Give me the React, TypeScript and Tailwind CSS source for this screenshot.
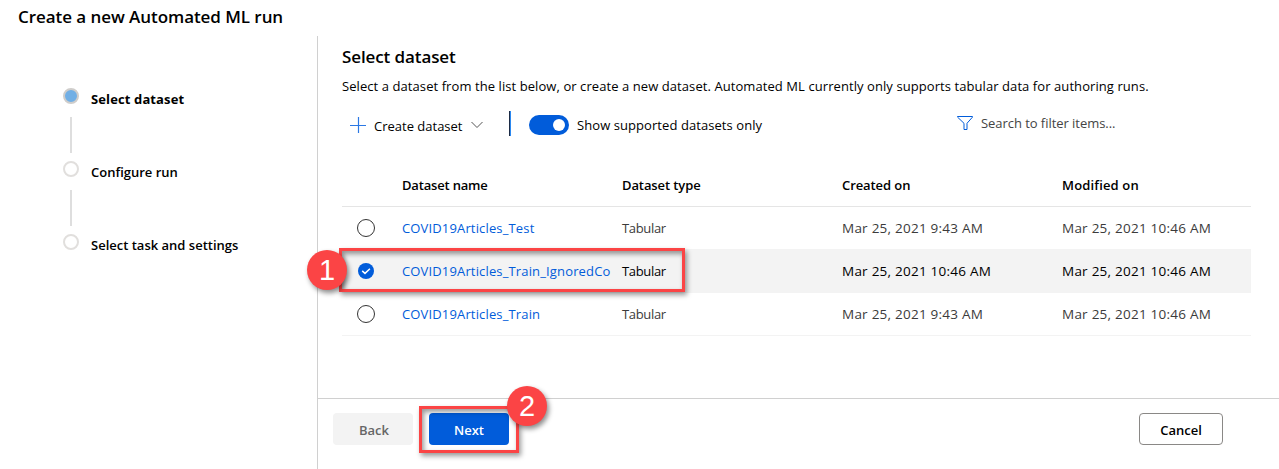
const steps = [
  { label: "Select dataset", cls: "font-bold tracking-[0.12px]", active: true },
  { label: "Configure run", cls: "font-semibold", active: false },
  { label: "Select task and settings", cls: "font-semibold", active: false },
];

const rows = [
  { name: "COVID19Articles_Test", created: "Mar 25, 2021 9:43 AM", modified: "Mar 25, 2021 10:46 AM", selected: false },
  { name: "COVID19Articles_Train_IgnoredCo", created: "Mar 25, 2021 10:46 AM", modified: "Mar 25, 2021 10:46 AM", selected: true },
  { name: "COVID19Articles_Train", created: "Mar 25, 2021 9:43 AM", modified: "Mar 25, 2021 10:46 AM", selected: false },
];

function Stepper() {
  return (
    <aside className="flex w-[317px] shrink-0 flex-col pl-[63px] pt-[52px]">
      {steps.map((s, i) => (
        <div key={s.label} className="flex h-[73px] shrink-0 gap-3">
          <div className="flex w-4 flex-col items-center">
            <span
              className={
                s.active
                  ? "h-4 w-4 shrink-0 rounded-full border-2 border-[#cfcdcb] bg-[#71afe5]"
                  : "h-4 w-4 shrink-0 rounded-full border-2 border-[#e1dfdd] bg-white"
              }
            />
            {i < steps.length - 1 && <span className="mt-[13px] h-9 w-0.5 bg-[#dedede]" />}
          </div>
          <div className="pt-[1px] leading-5">
            <span className={s.cls}>{s.label}</span>
          </div>
        </div>
      ))}
    </aside>
  );
}

function Toolbar() {
  return (
    <div className="mt-[15px] flex h-7 items-center pl-2">
      <svg width="16" height="16" viewBox="0 0 16 16" stroke="#2b78e4" strokeWidth="1.2" fill="none">
        <path d="M8.5 0v16M0 8.5h16" />
      </svg>
      <span className="ml-2 w-[89px] whitespace-nowrap pt-[3px]">Create dataset</span>
      <svg className="ml-2" width="12" height="8" viewBox="0 0 12 8" stroke="#555" fill="none">
        <path d="M.5 1 6 6.5 11.5 1" />
      </svg>
      <span className="-mt-[3px] ml-[26px] flex h-[25px] w-0.5">
        <span className="w-px bg-[#1c2b45]" />
        <span className="w-px bg-[#2b88f0]" />
      </span>
      <span className="ml-[18px] flex h-5 w-10 items-center justify-end rounded-full bg-[#015cda] pr-1">
        <span className="h-3 w-3 rounded-full bg-white" />
      </span>
      <span className="ml-2 w-[186px] whitespace-nowrap pt-px tracking-[0.07px]">Show supported datasets only</span>
      <svg className="-mt-1 ml-[194px]" width="16" height="16" viewBox="0 0 16 16" stroke="#015cda" fill="none">
        <path d="M.5 1.5h15v.6L10 8.3v6.2H7V8.3L.5 2.1z" />
      </svg>
      <span className="-mt-[3px] ml-2 whitespace-nowrap tracking-[-0.05px] text-[#444]">Search to filter items...</span>
    </div>
  );
}

function Radio({ selected }: { selected: boolean }) {
  if (selected) {
    return (
      <svg className="ml-4" width="16" height="16" viewBox="0 0 16 16" fill="none">
        <circle cx="8" cy="8" r="8" fill="#015cda" />
        <path d="M4.2 7.9 7 10.4l4.9-4.6" stroke="white" strokeWidth="1.5" />
      </svg>
    );
  }
  return <span className="ml-[15px] h-[18px] w-[18px] rounded-full border border-[#333]" />;
}

function Badge({ children }: { children: string }) {
  return (
    <span className="flex h-10 w-10 items-center justify-center rounded-full bg-[#fb4445] font-['Liberation_Sans',sans-serif] text-[29px] font-normal leading-none text-white shadow-[2px_3px_5px_rgba(0,0,0,0.45)]">
      {children}
    </span>
  );
}

function DatasetTable() {
  return (
    <div className="w-[909px]">
      <div className="mt-[25px] grid h-[43px] grid-cols-[60px_220px_220px_220px_189px] items-center border-b border-[#e5e5e5] pt-[2px] font-semibold">
        <span />
        <div className="tracking-[-0.18px]">Dataset name</div>
        <div className="tracking-[-0.1px]">Dataset type</div>
        <div className="tracking-[-0.08px]">Created on</div>
        <div className="tracking-[0.16px]">Modified on</div>
      </div>
      {rows.map((r) => (
        <div
          key={r.name}
          className={
            r.selected
              ? "relative grid h-[43px] grid-cols-[60px_220px_220px_220px_189px] items-center border-b border-[#f3f3f3] bg-[#f3f3f3]"
              : "grid h-[43px] grid-cols-[60px_220px_220px_220px_189px] items-center border-b border-[#f3f3f3] text-[#3b3b3b]"
          }
        >
          <Radio selected={r.selected} />
          <div className="whitespace-nowrap pt-px tracking-[0.15px] text-[#015cda]">{r.name}</div>
          <div className="pt-px tracking-[-0.33px]">Tabular</div>
          <div className="pt-px text-[13.5px] tracking-[0.24px]">{r.created}</div>
          <div className="pt-px text-[13.5px] tracking-[0.24px]">{r.modified}</div>
          {r.selected && (
            <>
              <span className="absolute -left-[3px] -top-[2px] h-11 w-[346px] border-[3px] border-[#fb4445] shadow-[2px_3px_5px_rgba(0,0,0,0.4),inset_2px_3px_5px_rgba(0,0,0,0.4)]" />
              <span className="absolute -left-[35px] top-0">
                <Badge>1</Badge>
              </span>
            </>
          )}
        </div>
      ))}
    </div>
  );
}

export default function App() {
  return (
    <div className="flex h-[469px] w-[1279px] flex-col overflow-hidden bg-white font-['Open_Sans','Noto_Sans',sans-serif] text-[13px] text-black">
      <header className="flex h-9 shrink-0 items-center pl-[18px]">
        <h1 className="pb-[2px] text-[17px] font-semibold leading-[34px] tracking-[-0.06px]">Create a new Automated ML run</h1>
      </header>
      <div className="flex min-h-0 flex-1">
        <Stepper />
        <main className="flex min-w-0 flex-1 flex-col border-l border-[#d0d0d0]">
          <section className="flex h-[362px] shrink-0 flex-col pl-6 pr-7">
            <h2 className="pt-[9px] text-[17px] font-semibold leading-6 tracking-[-0.1px]">Select dataset</h2>
            <p className="mt-[7px] whitespace-nowrap leading-5 tracking-[0.075px]">
              Select a dataset from the list below, or create a new dataset. Automated ML currently only supports tabular data for authoring runs.
            </p>
            <Toolbar />
            <DatasetTable />
          </section>
          <footer className="flex flex-1 items-start border-t border-[#d0d0d0] pl-[15px] pr-14 pt-[14px] font-semibold">
            <button className="h-8 w-20 rounded-sm bg-[#f3f3f3] pl-[2px] pt-[3px] text-[#666]">Back</button>
            <div className="relative ml-4">
              <button className="h-8 w-20 rounded-sm bg-[#015cda] pt-[3px] text-white">Next</button>
              <span className="absolute -left-[10px] -top-[7px] h-[47px] w-[100px] border-[3px] border-[#fb4445] shadow-[2px_3px_5px_rgba(0,0,0,0.4),inset_2px_3px_5px_rgba(0,0,0,0.4)]" />
              <span className="absolute -top-[27px] left-[78px]">
                <Badge>2</Badge>
              </span>
            </div>
            <button className="ml-auto h-8 w-[84px] rounded-sm border border-[#8a8886] pt-[3px]">Cancel</button>
          </footer>
        </main>
      </div>
    </div>
  );
}
